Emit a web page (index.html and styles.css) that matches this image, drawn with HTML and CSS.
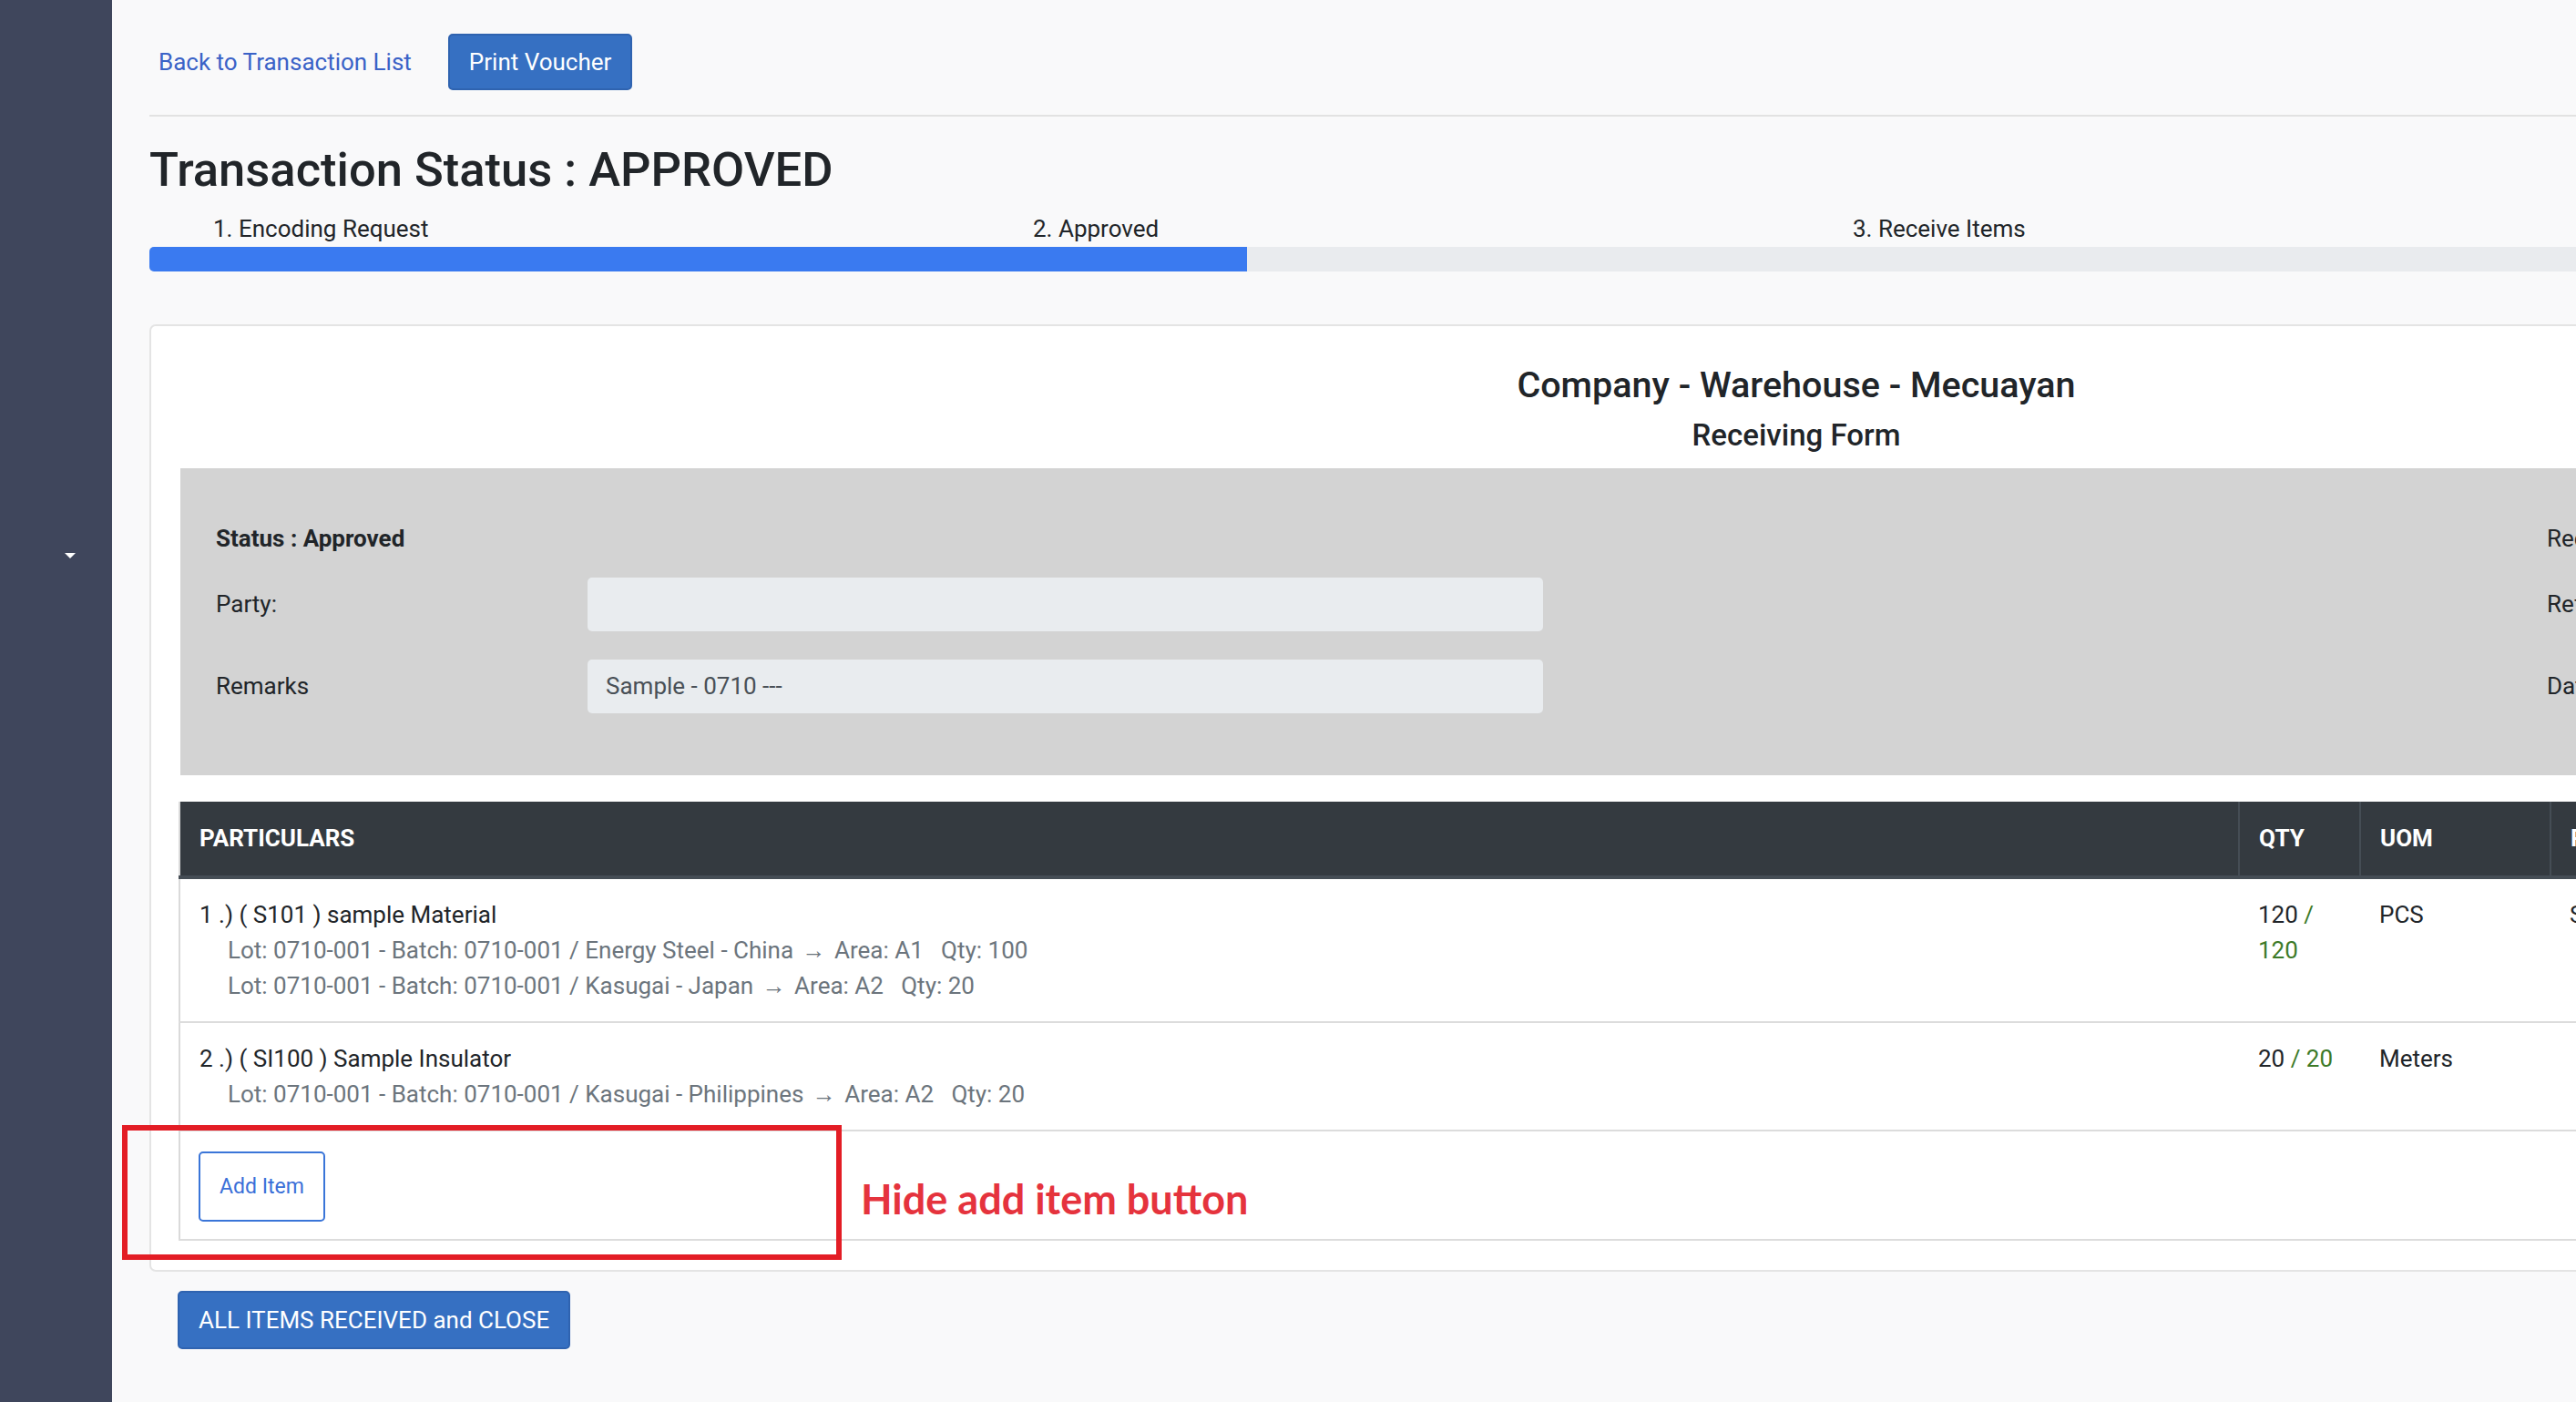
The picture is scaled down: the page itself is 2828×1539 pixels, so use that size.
FILE: index.html
```html
<!DOCTYPE html>
<html lang="en">
<head>
<meta charset="utf-8">
<title>Transaction Status</title>
<link rel="stylesheet" href="styles.css">
</head>
<body>
<div class="layout">
  <aside class="sidebar">
    <span class="caret"></span>
  </aside>
  <main class="main">
    <div class="topbar">
      <a class="back-link" href="#">Back to Transaction List</a>
      <button class="btn btn-primary btn-print">Print Voucher</button>
    </div>
    <div class="divider"></div>
    <h3 class="title">Transaction Status : APPROVED</h3>
    <div class="steps">
      <div class="step">1. Encoding Request</div>
      <div class="step">2. Approved</div>
      <div class="step">3. Receive Items</div>
      <div class="step">4. Completed</div>
    </div>
    <div class="progress"><div class="progress-bar" style="width:33.33%"></div></div>

    <section class="card">
      <div class="card-head">
        <h5 class="company">Company - Warehouse - Mecuayan</h5>
        <h6 class="form-name">Receiving Form</h6>
      </div>
      <div class="info">
        <div class="info-label status">Status : Approved</div>
        <div class="info-field"></div>
        <div class="info-gap"></div>
        <div class="info-label">Received By:</div>

        <div class="info-label">Party:</div>
        <div class="info-field"><div class="input"></div></div>
        <div class="info-gap"></div>
        <div class="info-label">Ref No:</div>

        <div class="info-label">Remarks</div>
        <div class="info-field"><div class="input">Sample - 0710 ---</div></div>
        <div class="info-gap"></div>
        <div class="info-label">Date:</div>
      </div>

      <table class="items">
        <colgroup>
          <col class="c-part">
          <col class="c-qty">
          <col class="c-uom">
          <col>
        </colgroup>
        <thead>
          <tr>
            <th>PARTICULARS</th>
            <th>QTY</th>
            <th>UOM</th>
            <th>REMARKS</th>
          </tr>
        </thead>
        <tbody>
          <tr>
            <td>
              <div>1 .) ( S101 ) sample Material</div>
              <div class="lot">Lot: 0710-001 - Batch: 0710-001 / Energy Steel - China <span class="arrow">&rarr;</span> Area: A1&nbsp;&nbsp; Qty: 100</div>
              <div class="lot">Lot: 0710-001 - Batch: 0710-001 / Kasugai - Japan <span class="arrow">&rarr;</span> Area: A2&nbsp;&nbsp; Qty: 20</div>
            </td>
            <td>120 <span class="ok">/ 120</span></td>
            <td>PCS</td>
            <td>Sample</td>
          </tr>
          <tr>
            <td>
              <div>2 .) ( SI100 ) Sample Insulator</div>
              <div class="lot">Lot: 0710-001 - Batch: 0710-001 / Kasugai - Philippines <span class="arrow">&rarr;</span> Area: A2&nbsp;&nbsp; Qty: 20</div>
            </td>
            <td>20 <span class="ok">/ 20</span></td>
            <td>Meters</td>
            <td></td>
          </tr>
          <tr>
            <td colspan="4" class="add-cell"><button class="btn btn-outline">Add Item</button></td>
          </tr>
        </tbody>
      </table>
    </section>

    <button class="btn btn-primary btn-close">ALL ITEMS RECEIVED and CLOSE</button>
  </main>
</div>

<div class="annot-box"></div>
<div class="annot-text">Hide add item button</div>
</body>
</html>
```

FILE: styles.css
```css
html, body {
  margin: 0;
  padding: 0;
}

body {
  width: 2828px;
  height: 1539px;
  overflow: hidden;
  position: relative;
  background: #f9f9fa;
  font-family: Roboto, "Liberation Sans", sans-serif;
  font-size: 26px;
  line-height: 39px;
  color: #212529;
}

.layout {
  display: flex;
  height: 1539px;
}

.sidebar {
  flex: none;
  width: 123px;
  background: #3f465c;
  padding: 607px 0 0 71px;
  box-sizing: border-box;
}

.caret {
  display: block;
  width: 0;
  height: 0;
  border-left: 6px solid transparent;
  border-right: 6px solid transparent;
  border-top: 6px solid #ffffff;
}

.main {
  flex: none;
  width: 3616px;
  padding: 37px 0 0 41px;
}

.topbar {
  display: flex;
  align-items: center;
  height: 62px;
}

.back-link {
  color: #3a62c7;
  text-decoration: none;
  margin-left: 10px;
  margin-right: 40px;
}

.btn {
  font-family: Roboto, "Liberation Sans", sans-serif;
  font-size: 26px;
  line-height: 39px;
  border-radius: 5px;
  cursor: pointer;
}

.btn-primary {
  background: #3670c2;
  color: #ffffff;
  border: 2px solid #2f63b0;
}

.btn-print {
  height: 62px;
  padding: 0 21px;
}

.divider {
  margin-top: 27px;
  height: 0;
  border-top: 2px solid #e2e2e2;
}

.title {
  margin: 28px 0 0 0;
  font-size: 52.5px;
  line-height: 60px;
  font-weight: 500;
  color: #212529;
}

.steps {
  display: grid;
  grid-template-columns: repeat(4, 900px);
  margin-top: 16px;
}

.step {
  padding-left: 70px;
  white-space: nowrap;
}

.progress {
  height: 27px;
  background: #e9ebee;
  border-radius: 5px 0 0 5px;
  overflow: hidden;
}

.progress-bar {
  height: 100%;
  background: #3a7af0;
}

.card {
  margin-top: 58px;
  background: #ffffff;
  border: 2px solid #e4e4e4;
  border-radius: 7px;
  padding: 42px 32px 32px 32px;
}

.card-head {
  text-align: center;
}

.company {
  margin: 0;
  font-size: 39.5px;
  line-height: 46px;
  font-weight: 500;
}

.form-name {
  margin: 12px 0 0 0;
  font-size: 33px;
  line-height: 39px;
  font-weight: 500;
}

.info {
  margin-top: 17px;
  background: #d3d3d3;
  padding: 65px 39px 68px 39px;
  display: grid;
  grid-template-columns: 408px 1049px 1102px 1fr;
  grid-template-rows: 24px 59px 59px;
  row-gap: 31px;
  align-items: center;
}

.info-label {
  white-space: nowrap;
}

.info-label.status {
  font-weight: 700;
}

.input {
  height: 59px;
  background: #e9ecef;
  border-radius: 5px;
  padding: 0 20px;
  line-height: 59px;
  color: #495057;
}

.items {
  margin-top: 29px;
  margin-left: -2px;
  width: calc(100% + 2px);
  table-layout: fixed;
  border-collapse: collapse;
  border-left: 2px solid #dadada;
}

.c-part { width: 2261px; }
.c-qty { width: 133px; }
.c-uom { width: 209px; }

.items th {
  background: #343a40;
  color: #ffffff;
  font-weight: 700;
  text-align: left;
  padding: 21px;
  border-left: 2px solid #454d55;
  border-bottom: 4px solid #454d55;
}

.items th:first-child {
  border-left: none;
}

.items td {
  vertical-align: top;
  padding: 20px 21px 19px 21px;
  border-bottom: 2px solid #dcdcdc;
}

.items td.add-cell {
  padding-left: 20px;
}

.lot {
  color: #6c757d;
  padding-left: 31px;
  white-space: nowrap;
}

.arrow {
  margin: 0 3px;
}

.ok {
  color: #3d7a28;
}

.btn-outline {
  background: #ffffff;
  color: #3a6fd8;
  border: 2px solid #3a75d8;
  font-size: 23px;
  height: 77px;
  padding: 0 21px;
  margin-top: 2px;
  display: block;
}

.btn-close {
  display: block;
  margin: 21px 0 0 31px;
  height: 64px;
  padding: 0 21px;
}

.annot-box {
  position: absolute;
  left: 134px;
  top: 1235px;
  width: 790px;
  height: 148px;
  box-sizing: border-box;
  border: 6px solid #e31d25;
}

.annot-text {
  position: absolute;
  left: 945px;
  top: 1290px;
  font-family: Lato, "Open Sans", sans-serif;
  font-weight: 700;
  font-size: 45px;
  line-height: 53px;
  color: #e5333d;
  white-space: nowrap;
}
```
